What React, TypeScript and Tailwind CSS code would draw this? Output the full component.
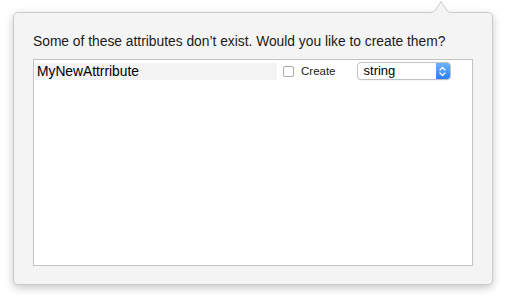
export default function App() {
  return (
    <div
      className="w-[506px] h-[298px] bg-white pt-[12px] pl-[13px]"
      style={{ fontFamily: '"Liberation Sans", Arial, sans-serif' }}
    >
      <div className="relative w-[480px] h-[273px] rounded-[5px] bg-[#f4f4f4] border border-[#cbcbcb] shadow-[0_3px_9px_rgba(0,0,0,0.22)] px-[19px] pt-[21px]">
        {/* popover arrow */}
        <svg
          className="absolute -top-[13px] left-[413px]"
          width="28"
          height="14"
          viewBox="0 0 28 14"
        >
          <path d="M0 13.5 C5 13.5 7 12 9 9 L14 1.5 L19 9 C21 12 23 13.5 28 13.5" fill="#f4f4f4" stroke="#cbcbcb" strokeWidth="1" />
          <rect x="0" y="13" width="28" height="2" fill="#f4f4f4" />
        </svg>
        <p className="text-[13.8px] leading-[16px] text-[#1a1a1a]">
          Some of these attributes don’t exist. Would you like to create them?
        </p>
        <div className="mt-[9px] h-[207px] w-[440px] bg-white border border-[#c3c3c3] pl-[1px] pt-[2px]">
          <div className="flex items-center h-[18px]">
            <div className="w-[242px] h-[17px] bg-[#f3f3f3] pl-[2px] text-[13.8px] leading-[17px] text-black">
              MyNewAttrribute
            </div>
            <div className="ml-[6px] w-[11px] h-[11px] rounded-[2px] border border-[#a9a9a9] bg-white" />
            <span className="ml-[7px] text-[11.5px] leading-[16px] text-[#222]">Create</span>
            <div className="ml-[21px] flex w-[94px] h-[18px] rounded-[4px] border border-[#c2c2c2] bg-white overflow-hidden shadow-[0_0.5px_0.5px_rgba(0,0,0,0.08)]">
              <span className="flex-1 pl-[6px] text-[13px] leading-[16px] text-black">string</span>
              <div className="w-[14px] h-full bg-gradient-to-b from-[#6cb3fa] to-[#2a7ff5] flex items-center justify-center">
                <svg width="7" height="11" viewBox="0 0 7 11">
                  <path d="M1 4 L3.5 1.5 L6 4 M1 7 L3.5 9.5 L6 7" fill="none" stroke="white" strokeWidth="1.2" strokeLinecap="round" strokeLinejoin="round" />
                </svg>
              </div>
            </div>
          </div>
        </div>
      </div>
    </div>
  );
}
